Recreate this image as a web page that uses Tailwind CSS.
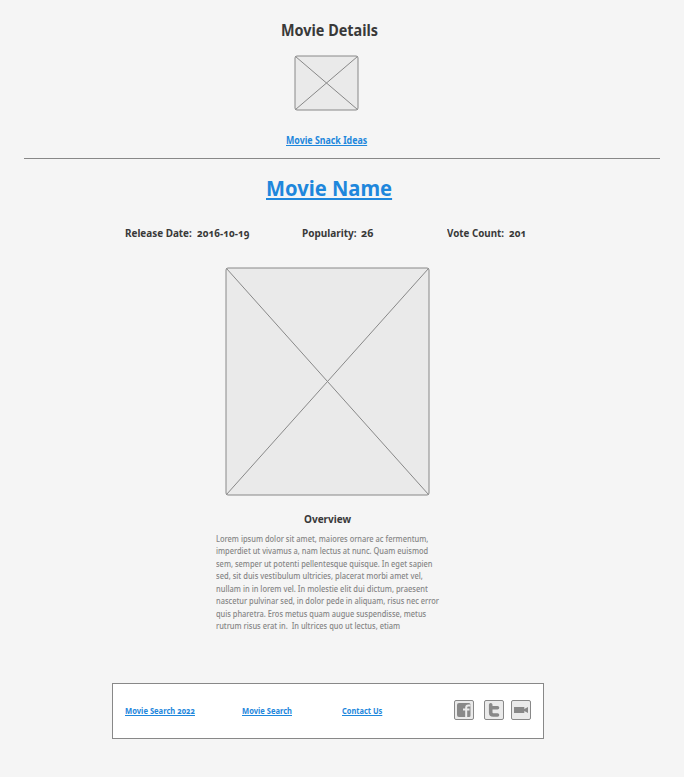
<!DOCTYPE html>
<html lang="en">
<head>
<meta charset="utf-8">
<title>Movie Details</title>
<script src="https://cdn.jsdelivr.net/npm/@tailwindcss/browser@4"></script>
</head>
<body class="h-[777px] w-[684px] overflow-hidden bg-[#f5f5f5] font-['Noto_Sans',sans-serif] text-[#393939] whitespace-nowrap oldstyle-nums">
<header class="mx-6 flex h-[159px] flex-col border-b border-[#888] pt-5">
  <h1 class="ml-[256.5px] h-5 w-fit origin-left scale-x-[0.9] text-[16px] leading-5 font-bold">Movie Details</h1>
  <svg class="mt-[15px] ml-[270px] h-[56px] w-[66px] shrink-0" viewBox="0 0 66 56" fill="none" stroke="#888">
    <rect x="1" y="1" width="63" height="54" rx="2" fill="#eaeaea"/>
    <path d="M1.5 1.5L63.5 54.5M63.5 1.5L1.5 54.5"/>
  </svg>
  <a class="mt-[23px] ml-[262px] h-3 w-fit origin-left scale-x-[0.883] text-[10px] leading-3 font-bold text-[#1e87dc] underline decoration-1 underline-offset-1">Movie Snack Ideas</a>
</header>
<main class="flex flex-col pt-[15px]">
  <h2 class="ml-[266px] h-7 w-fit origin-left scale-x-[0.937] text-[21.5px] leading-7 font-bold text-[#1e87dc] underline decoration-2 underline-offset-2">Movie Name</h2>
  <div class="mt-[23px] ml-[125px] flex h-4 text-[11px] leading-4 font-bold">
    <div class="flex w-[176.5px]"><span class="w-[71.5px] origin-left scale-x-[0.9]">Release Date:</span><span class="origin-left scale-x-[0.9]">2016-10-19</span></div>
    <div class="flex w-[145px]"><span class="w-[59.5px] origin-left scale-x-[0.91]">Popularity:</span><span class="origin-left scale-x-[0.98]">26</span></div>
    <div class="flex"><span class="w-[62px] origin-left scale-x-[0.89]">Vote Count:</span><span class="origin-left scale-x-[0.9]">201</span></div>
  </div>
  <svg class="mt-[26px] ml-[225px] h-[229px] w-[206px]" viewBox="0 0 206 229" fill="none" stroke="#888">
    <rect x="1" y="1" width="203" height="227" rx="2" fill="#eaeaea"/>
    <path d="M1.5 1.5L203.5 227.5M203.5 1.5L1.5 227.5"/>
  </svg>
  <h3 class="mt-[15px] ml-[304px] h-4 w-fit origin-left scale-x-[0.91] text-[11px] leading-4 font-bold">Overview</h3>
  <p class="mt-[5.5px] ml-[215.5px] flex flex-col text-[8px] leading-[12.5px] font-medium text-[#858585] *:w-fit *:origin-left">
    <span class="scale-x-[0.935]">Lorem ipsum dolor sit amet, maiores ornare ac fermentum,</span>
    <span class="scale-x-[0.932]">imperdiet ut vivamus a, nam lectus at nunc. Quam euismod</span>
    <span class="scale-x-[0.932]">sem, semper ut potenti pellentesque quisque. In eget sapien</span>
    <span class="scale-x-[0.942]">sed, sit duis vestibulum ultricies, placerat morbi amet vel,</span>
    <span class="scale-x-[0.942]">nullam in in lorem vel. In molestie elit dui dictum, praesent</span>
    <span class="scale-x-[0.93]">nascetur pulvinar sed, in dolor pede in aliquam, risus nec error</span>
    <span class="scale-x-[0.93]">quis pharetra. Eros metus quam augue suspendisse, metus</span>
    <span class="scale-x-[0.934]">rutrum risus erat in. &nbsp;In ultrices quo ut lectus, etiam</span>
  </p>
</main>
<footer class="mt-[50.5px] ml-[112px] flex h-[56px] w-[432px] border border-[#888] bg-white pl-3">
  <nav class="mt-[21px] flex h-3 w-[329px] text-[8px] leading-3 font-bold text-[#1e87dc]">
    <div class="w-[117px]"><a class="inline-block origin-left scale-x-[0.95] underline decoration-1 underline-offset-1">Movie Search 2022</a></div>
    <div class="w-[100px]"><a class="inline-block origin-left scale-x-[0.945] underline decoration-1 underline-offset-1">Movie Search</a></div>
    <a class="h-3 origin-left scale-x-[0.93] underline decoration-1 underline-offset-1">Contact Us</a>
  </nav>
  <div class="mt-4 flex">
    <svg class="mr-[10px] size-5" viewBox="0 0 20 20">
      <rect x=".5" y=".5" width="19" height="19" rx="1.5" fill="#eaeaea" stroke="#888"/>
      <path d="M5 3H15Q16.5 3 16.5 4.5V15.5Q16.5 17 15 17H5Q3 17 3 15V5Q3 3 5 3Z" fill="#888"/>
      <path d="M12.2 17V7.8Q12.2 5.6 14.4 5.6H16.5M9 9.5H15.5" fill="none" stroke="#eaeaea" stroke-width="2"/>
    </svg>
    <svg class="mr-[7px] size-5" viewBox="0 0 20 20">
      <rect x=".5" y=".5" width="19" height="19" rx="1.5" fill="#eaeaea" stroke="#888"/>
      <path d="M6.7 4.7V12.5Q6.7 15 9.2 15H13.5M6.7 7.8H13.5" fill="none" stroke="#888" stroke-width="3.6" stroke-linecap="round"/>
    </svg>
    <svg class="size-5" viewBox="0 0 20 20">
      <rect x=".5" y=".5" width="19" height="19" rx="1.5" fill="#eaeaea" stroke="#888"/>
      <path d="M3 7H13.3V9L17 7V13L13.3 11V13H3Z" fill="#888"/>
    </svg>
  </div>
</footer>
</body>
</html>
